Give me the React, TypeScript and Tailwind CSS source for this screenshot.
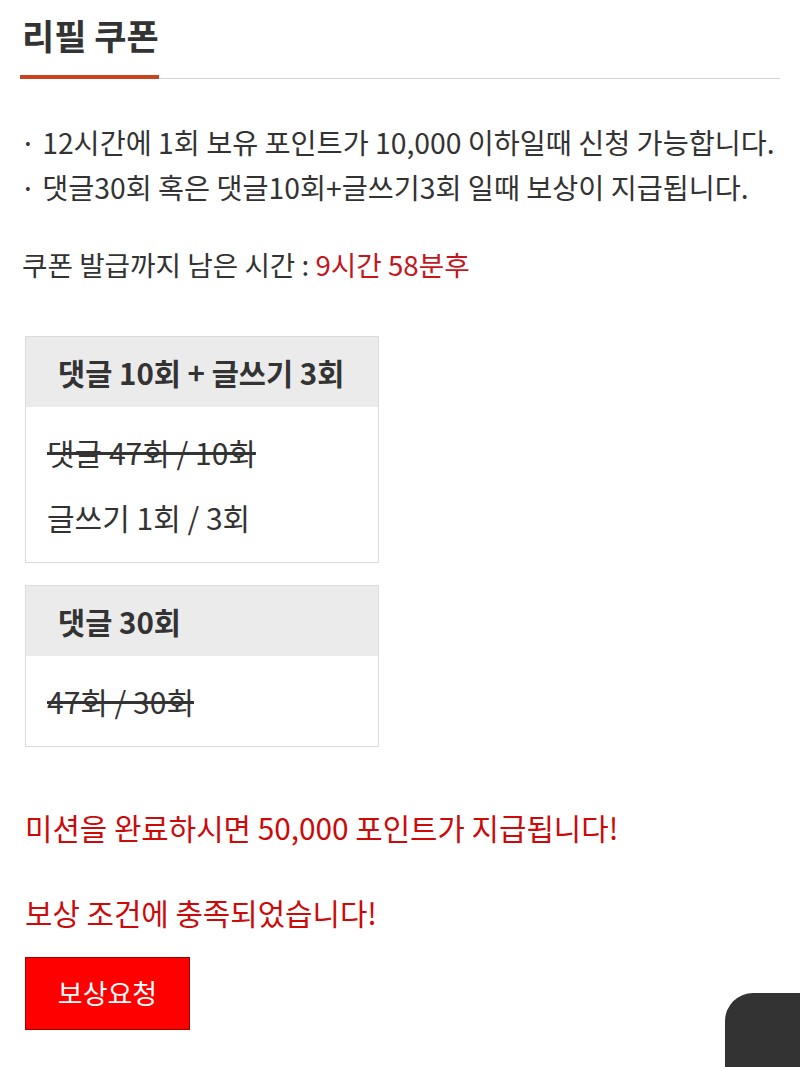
import React from "react"

const font = { fontFamily: '"Noto Sans CJK KR", "Noto Sans", sans-serif' }

type Mission = {
  title: string
  rows: { text: string; done: boolean }[]
}

const missions: Mission[] = [
  {
    title: "댓글 10회 + 글쓰기 3회",
    rows: [
      { text: "댓글 47회 / 10회", done: true },
      { text: "글쓰기 1회 / 3회", done: false },
    ],
  },
  {
    title: "댓글 30회",
    rows: [{ text: "47회 / 30회", done: true }],
  },
]

function MissionBox({ mission }: { mission: Mission }) {
  return (
    <div className="ml-[5px] w-[354px] border border-[#dcdcdc]">
      <div className="flex h-[70px] items-center bg-[#ebebeb] pl-[32px] text-[29.5px] font-bold text-[#333]">
        {mission.title}
      </div>
      <div className="flex flex-col gap-[25px] px-[21px] py-[25px]">
        {mission.rows.map((row) => (
          <p
            key={row.text}
            className={
              "text-[30px] leading-[40px] text-[#333] " +
              (row.done ? "line-through decoration-[#333] decoration-[3px]" : "")
            }
          >
            {row.text}
          </p>
        ))}
      </div>
    </div>
  )
}

export default function App() {
  return (
    <div className="relative min-h-[1067px] overflow-hidden bg-white px-[20px]" style={font}>
      {/* 제목 */}
      <div className="flex pt-[11px]">
        <h1 className="w-[139px] border-b-4 border-[#c9431f] pb-[16px] pl-[2px] text-[35px] font-bold leading-[48px] text-[#333]">
          리필 쿠폰
        </h1>
        <div className="flex-1 border-b border-[#d4d4d4]" />
      </div>

      {/* 안내 */}
      <ul className="mt-[40px] text-[28.3px] leading-[45px] text-[#333]">
        <li>· 12시간에 1회 보유 포인트가 10,000 이하일때 신청 가능합니다.</li>
        <li>· 댓글30회 혹은 댓글10회+글쓰기3회 일때 보상이 지급됩니다.</li>
      </ul>

      <p className="mt-[33px] pl-[2px] text-[27.7px] leading-[45px] text-[#333]">
        쿠폰 발급까지 남은 시간 : <span className="text-[#c4161c]">9시간 58분후</span>
      </p>

      {/* 미션 */}
      <div className="mt-[49px] flex flex-col gap-[22px]">
        {missions.map((m) => (
          <MissionBox key={m.title} mission={m} />
        ))}
      </div>

      <p className="mt-[60px] pl-[5px] text-[29.8px] leading-[40px] text-[#cc0a0a]">
        미션을 완료하시면 50,000 포인트가 지급됩니다!
      </p>
      <p className="mt-[45px] pl-[5px] text-[29.8px] leading-[40px] text-[#cc0a0a]">
        보상 조건에 충족되었습니다!
      </p>

      <button className="ml-[5px] mt-[25px] flex h-[73px] w-[165px] items-center justify-center border border-[#a00000] bg-[#ff0000] text-[27px] text-white">
        보상요청
      </button>

      {/* 플로팅 버튼 */}
      <div className="absolute left-[725px] top-[993px] h-[80px] w-[90px] rounded-tl-[28px] bg-[#333]" />
    </div>
  )
}
